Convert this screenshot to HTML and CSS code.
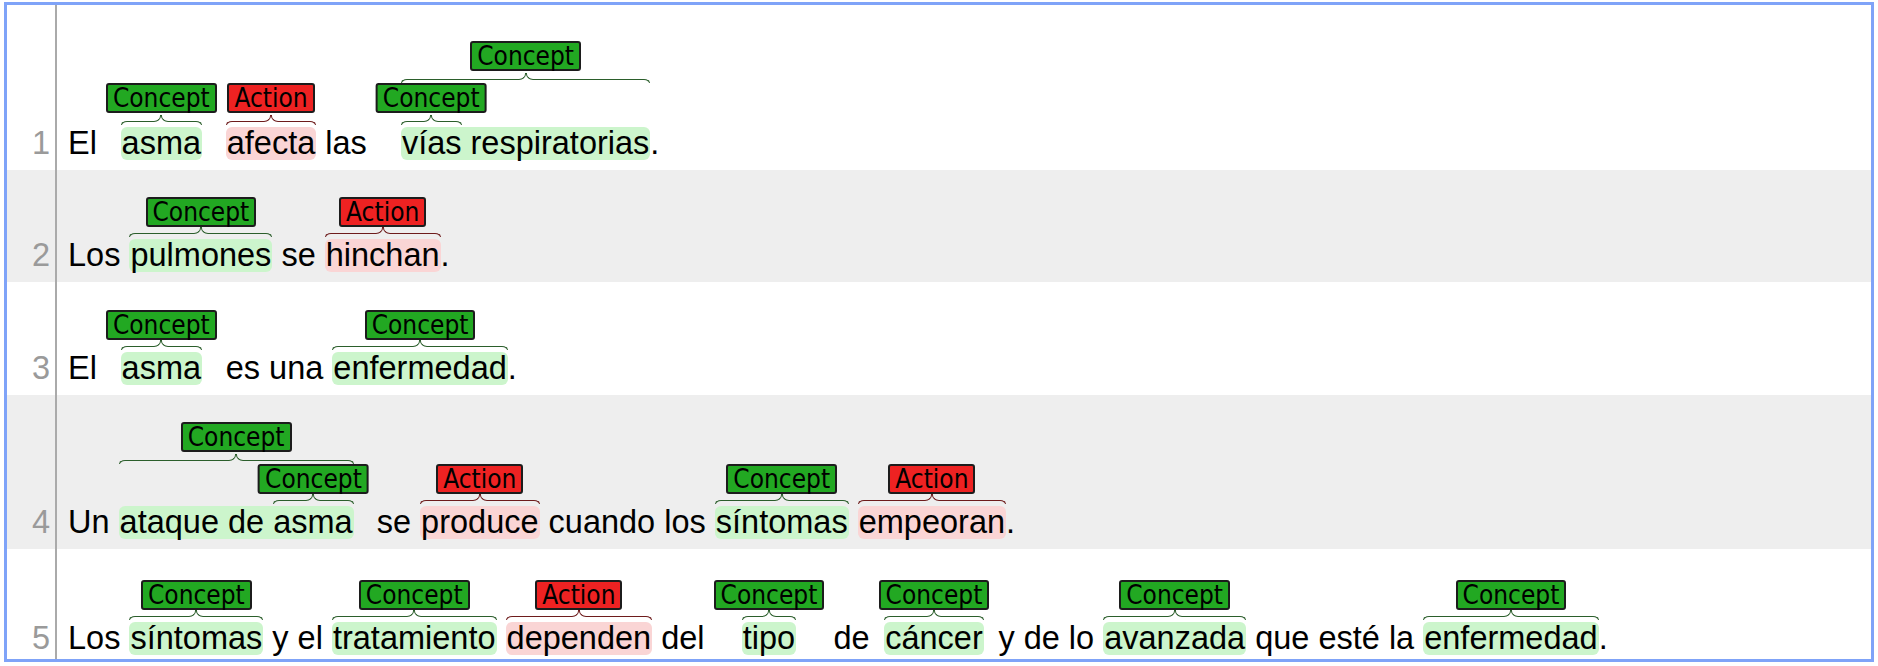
FILE: index.html
```html
<!DOCTYPE html>
<html lang="es">
<head>
<meta charset="utf-8">
<title>Anotaciones</title>
<link rel="stylesheet" href="styles.css">
</head>
<body>
<div class="frame">
  <div class="row r1">
    <div class="num">1</div>
    <div class="txt"><div class="line">El <span class="ann c"><span class="lab">Concept</span><span class="tx">asma<span class="br"><i></i><i></i><i></i><i></i></span></span></span> <span class="ann a"><span class="lab">Action</span><span class="tx">afecta<span class="br"><i></i><i></i><i></i><i></i></span></span></span> las <span class="ann ann2 c gap-l"><span class="lab">Concept</span><span class="br"><i></i><i></i><i></i><i></i></span><span class="sub c"><span class="lab">Concept</span><span class="tx l">vías<span class="br"><i></i><i></i><i></i><i></i></span></span></span><span class="tx r">&nbsp;respiratorias</span></span>.</div></div>
  </div>
  <div class="row r2">
    <div class="num">2</div>
    <div class="txt"><div class="line">Los <span class="ann c"><span class="lab">Concept</span><span class="tx">pulmones<span class="br"><i></i><i></i><i></i><i></i></span></span></span> se <span class="ann a"><span class="lab">Action</span><span class="tx">hinchan<span class="br"><i></i><i></i><i></i><i></i></span></span></span>.</div></div>
  </div>
  <div class="row r3">
    <div class="num">3</div>
    <div class="txt"><div class="line">El <span class="ann c"><span class="lab">Concept</span><span class="tx">asma<span class="br"><i></i><i></i><i></i><i></i></span></span></span> es una <span class="ann c"><span class="lab">Concept</span><span class="tx">enfermedad<span class="br"><i></i><i></i><i></i><i></i></span></span></span>.</div></div>
  </div>
  <div class="row r4">
    <div class="num">4</div>
    <div class="txt"><div class="line">Un <span class="ann ann2 c gap-r"><span class="lab">Concept</span><span class="br"><i></i><i></i><i></i><i></i></span><span class="tx l">ataque de&nbsp;</span><span class="sub c"><span class="lab">Concept</span><span class="tx r">asma<span class="br"><i></i><i></i><i></i><i></i></span></span></span></span> se <span class="ann a"><span class="lab">Action</span><span class="tx">produce<span class="br"><i></i><i></i><i></i><i></i></span></span></span> cuando los <span class="ann c"><span class="lab">Concept</span><span class="tx">síntomas<span class="br"><i></i><i></i><i></i><i></i></span></span></span> <span class="ann a"><span class="lab">Action</span><span class="tx">empeoran<span class="br"><i></i><i></i><i></i><i></i></span></span></span>.</div></div>
  </div>
  <div class="row r5">
    <div class="num">5</div>
    <div class="txt"><div class="line">Los <span class="ann c"><span class="lab">Concept</span><span class="tx">síntomas<span class="br"><i></i><i></i><i></i><i></i></span></span></span> y el <span class="ann c"><span class="lab">Concept</span><span class="tx">tratamiento<span class="br"><i></i><i></i><i></i><i></i></span></span></span> <span class="ann a"><span class="lab">Action</span><span class="tx">dependen<span class="br"><i></i><i></i><i></i><i></i></span></span></span> del <span class="ann c"><span class="lab">Concept</span><span class="tx">tipo<span class="br"><i></i><i></i><i></i><i></i></span></span></span> de <span class="ann c"><span class="lab">Concept</span><span class="tx">cáncer<span class="br"><i></i><i></i><i></i><i></i></span></span></span> y de lo <span class="ann c"><span class="lab">Concept</span><span class="tx">avanzada<span class="br"><i></i><i></i><i></i><i></i></span></span></span> que esté la <span class="ann c"><span class="lab">Concept</span><span class="tx">enfermedad<span class="br"><i></i><i></i><i></i><i></i></span></span></span>.</div></div>
  </div>
</div>
</body>
</html>
```

FILE: styles.css
```css
* { box-sizing: border-box; }

body {
  margin: 0;
  background: #ffffff;
  font-family: "Liberation Sans", Arial, sans-serif;
}

.frame {
  margin: 2px 4px;
  height: 660px;
  border: 3px solid #7fa3f8;
  overflow: hidden;
}

.row { display: flex; }
.row:nth-child(even) { background: #eeeeee; }
.r1 { height: 165px; }
.r2 { height: 112px; }
.r3 { height: 113px; }
.r4 { height: 154px; }
.r5 { height: 110px; }

.num {
  flex: 0 0 50px;
  display: flex;
  align-items: flex-end;
  justify-content: flex-end;
  padding: 0 5px 10px 0;
  border-right: 2px solid #aaaaaa;
  font-size: 32.5px;
  line-height: 33px;
  color: #9a9a9a;
}

.txt {
  flex: 1;
  display: flex;
  flex-direction: column;
  justify-content: flex-end;
  padding: 0 0 10px 11px;
  font-size: 32.5px;
  line-height: 33px;
  color: #000;
  white-space: nowrap;
}

.r5 .num,
.r5 .txt { padding-bottom: 4px; }

.ann {
  display: inline-block;
  text-align: center;
  vertical-align: baseline;
  line-height: 33px;
}
.gap-l { margin-left: 25px; }
.gap-r { margin-right: 14px; }

.lab {
  display: block;
  width: fit-content;
  margin: 0 auto 12px;
  padding: 0 5px;
  border: 2px solid #1c1c1c;
  border-radius: 3px;
  font-family: "DejaVu Sans Condensed", "DejaVu Sans", sans-serif;
  font-stretch: condensed;
  font-size: 26px;
  line-height: 26px;
  color: #000;
  white-space: nowrap;
}
.r1 .lab { margin-bottom: 14px; }
.c .lab { background: #22a822; }
.a .lab { background: #ee2222; }
.ann2 > .lab,
.r1 .ann2 > .lab { margin-bottom: 2px; }

.tx {
  display: inline-block;
  position: relative;
  padding: 0 1px;
  border-radius: 6px;
}
.c .tx { background: #ccf5cc; }
.a .tx { background: #fad5d5; }
.tx.l { border-radius: 6px 0 0 6px; padding-right: 0; }
.tx.r { border-radius: 0 6px 6px 0; padding-left: 0; }

.sub {
  display: inline-block;
  position: relative;
  padding-top: 42px;
}
.r1 .sub { padding-top: 44px; }
.sub > .lab {
  position: absolute;
  top: 0;
  left: 50%;
  margin: 0;
  transform: translateX(-50%);
}

/* curly brace */
.br {
  display: flex;
  height: 10px;
}
.tx > .br {
  position: absolute;
  left: 0;
  right: 0;
  top: -12px;
}
.c .br { color: #2b5e2b; }
.a .br { color: #6e1c1c; }
.br i {
  flex: 1;
  border: 0 solid currentColor;
}
.br i:nth-child(1) {
  margin-top: 6px;
  border-top-width: 1px;
  border-left-width: 1px;
  border-top-left-radius: 6px 4px;
}
.br i:nth-child(2) {
  height: 7px;
  border-bottom-width: 1px;
  border-right-width: 1px;
  border-bottom-right-radius: 7px 6px;
}
.br i:nth-child(3) {
  height: 7px;
  border-bottom-width: 1px;
  border-left-width: 1px;
  border-bottom-left-radius: 7px 6px;
}
.br i:nth-child(4) {
  margin-top: 6px;
  border-top-width: 1px;
  border-right-width: 1px;
  border-top-right-radius: 6px 4px;
}
```
